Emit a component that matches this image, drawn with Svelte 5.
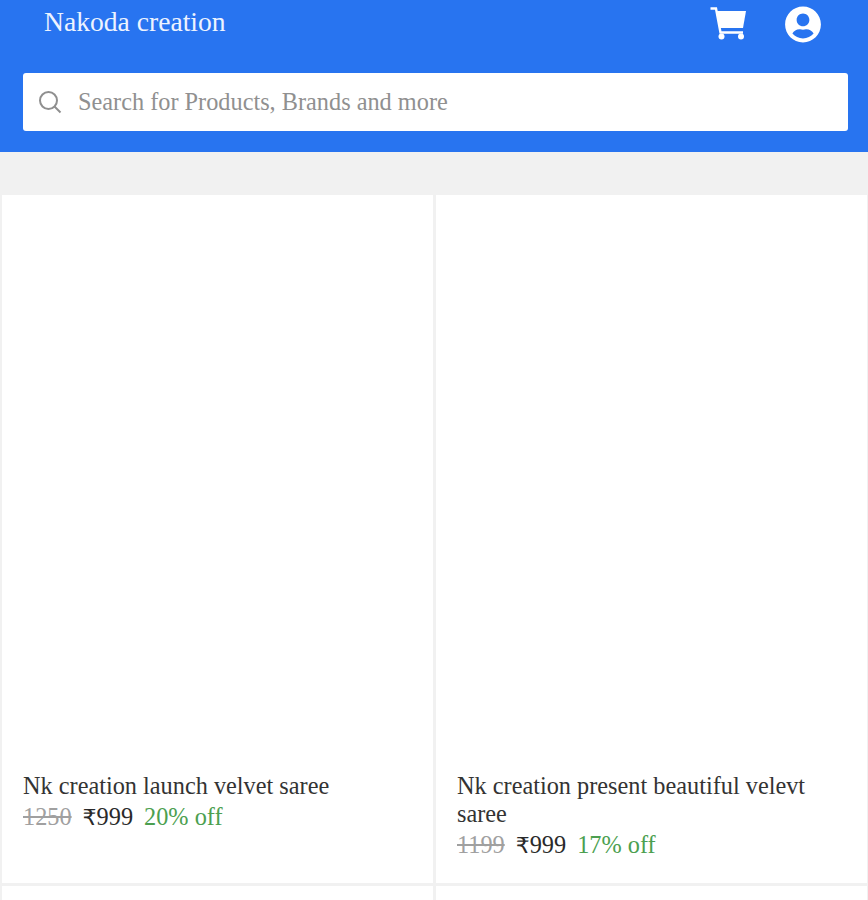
<script>
  const products = [
    { title: 'Nk creation launch velvet saree', mrp: 1250, price: 999, off: 20 },
    { title: 'Nk creation present beautiful velevt saree', mrp: 1199, price: 999, off: 17 },
    { title: '', mrp: 0, price: 0, off: 0 },
    { title: '', mrp: 0, price: 0, off: 0 }
  ]
</script>

<div class="page">
  <header class="header">
    <div class="topRow">
      <div class="brand">Nakoda creation</div>
      <div class="actions">
        <svg class="cart" viewBox="0 0 37 33" aria-hidden="true">
          <path d="M7 4H36L33 21H10Z" fill="#fff" />
          <path d="M0.500 1.500H6L10.500 25.500H33" fill="none" stroke="#fff" stroke-width="2.400" />
          <circle cx="11.500" cy="29.500" r="3" fill="#fff" />
          <circle cx="31" cy="29.500" r="3" fill="#fff" />
        </svg>
        <svg class="account" viewBox="0 0 496 512" fill="#fff" aria-hidden="true">
          <path d="M248 8C111 8 0 119 0 256s111 248 248 248 248-111 248-248S385 8 248 8zm0 96c48.600 0 88 39.400 88 88s-39.400 88-88 88-88-39.400-88-88 39.400-88 88-88zm0 344c-58.700 0-111.300-26.600-146.500-68.200 18.800-35.400 55.600-59.800 98.500-59.800 2.400 0 4.800.4 7.100 1.100 13 4.200 26.600 6.900 40.900 6.900 14.300 0 28-2.700 40.900-6.900 2.300-.7 4.700-1.100 7.100-1.100 42.900 0 79.700 24.400 98.500 59.800C359.300 421.400 306.700 448 248 448z" />
        </svg>
      </div>
    </div>
    <div class="search">
      <svg class="searchIcon" viewBox="0 0 24 24" fill="none" stroke="#8f8f8f" stroke-width="2" aria-hidden="true">
        <circle cx="10.500" cy="10.500" r="8.500" />
        <path d="M16.500 16.500 L22.500 22.500" />
      </svg>
      <span class="placeholder">Search for Products, Brands and more</span>
    </div>
  </header>

  <main class="grid">
    {#each products as p}
      <article class="card">
        {#if p.title}
          <div class="imageArea"></div>
          <div class="title">{p.title}</div>
          <div class="prices">
            <span class="mrp">{p.mrp}</span>
            <span class="price"><span class="rupee">₹</span>{p.price}</span>
            <span class="off">{p.off}% off</span>
          </div>
        {/if}
      </article>
    {/each}
  </main>
</div>

<style>
  :global(body) {
    margin: 0;
    background: #f1f1f1;
  }

  .page {
    height: 900px;
    overflow: hidden;
    font-family: "Liberation Serif", serif;
  }

  .header {
    box-sizing: border-box;
    height: 152px;
    padding: 0 20px 0 23px;
    background: #2874f0;
  }

  .topRow {
    height: 73px;
    display: flex;
    justify-content: space-between;
    align-items: flex-start;
  }

  .brand {
    padding: 5px 0 0 21px;
    font-size: 27.600px;
    line-height: 34px;
    color: #edf3ff;
  }

  .actions {
    display: flex;
    align-items: flex-start;
    gap: 38px;
    padding: 6px 27px 0 0;
  }

  .cart {
    width: 37px;
    height: 33px;
    margin-top: 1px;
  }

  .account {
    width: 36px;
    height: 37px;
  }

  .search {
    box-sizing: border-box;
    height: 58px;
    display: flex;
    align-items: center;
    gap: 16px;
    padding-left: 15px;
    border-radius: 3px;
    background: #fff;
  }

  .searchIcon {
    width: 24px;
    height: 24px;
  }

  .placeholder {
    font-size: 24.300px;
    color: #909090;
  }

  .grid {
    display: grid;
    grid-template-columns: 431px 431px;
    grid-auto-rows: 688px;
    gap: 3px;
    padding: 43px 1px 0 2px;
  }

  .card {
    box-sizing: border-box;
    padding-left: 21px;
    background: #fff;
  }

  .imageArea {
    height: 577px;
  }

  .title {
    padding-right: 30px;
    font-size: 24.300px;
    line-height: 28px;
    color: #333;
  }

  .prices {
    display: flex;
    align-items: baseline;
    gap: 11px;
    margin-top: 1px;
    font-size: 24.300px;
    line-height: 32px;
  }

  .mrp {
    color: #a0a0a0;
    text-decoration: line-through;
  }

  .price {
    color: #2a2a2a;
  }

  .rupee {
    font-family: "DejaVu Sans", sans-serif;
    font-size: 22px;
  }

  .off {
    color: #4c9f50;
  }
</style>
